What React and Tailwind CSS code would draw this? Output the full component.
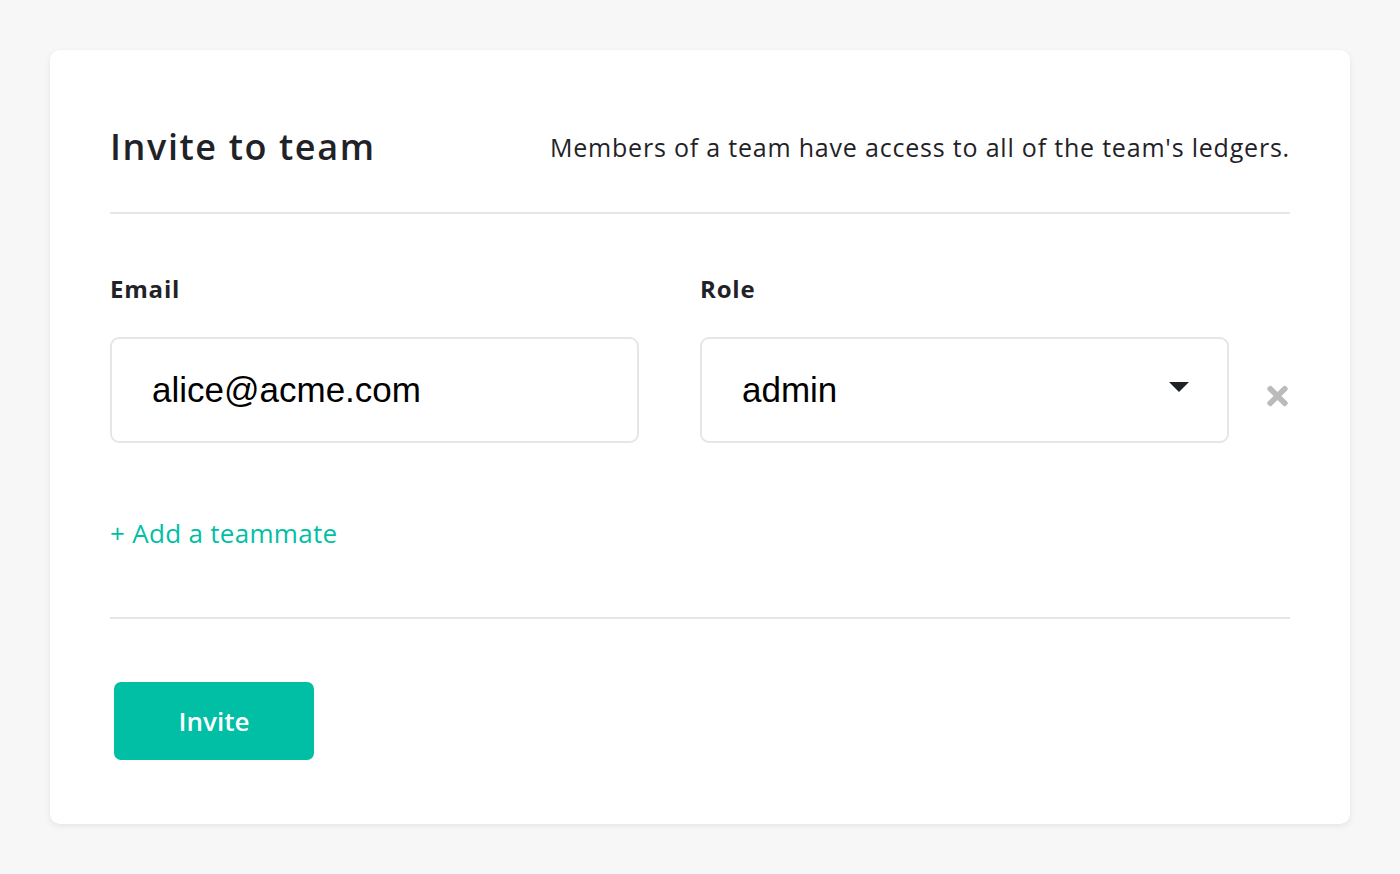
import React from 'react';
import { FaTimes } from 'react-icons/fa';

const App = () => {
  return (
    <div className="min-h-[874px] bg-[#f7f7f7] pt-[50px] px-[50px] font-['Open_Sans',sans-serif] text-[#1f2328]">
      <div className="bg-white rounded-[10px] shadow-[0_2px_6px_rgba(0,0,0,0.08)] px-[60px] pt-[60px] pb-[64px]">
        {/* Header */}
        <div className="flex justify-between items-center h-[74px] mb-[28px]">
          <h1 className="text-[36px] leading-none font-semibold tracking-[1.6px]">Invite to team</h1>
          <p className="text-[25px] leading-none tracking-[0.8px]">Members of a team have access to all of the team's ledgers.</p>
        </div>
        <div className="h-[2px] bg-[#e6e6e6]" />

        {/* Fields */}
        <div className="flex mt-[63px]">
          <div className="w-[529px] shrink-0">
            <label className="block text-[24px] leading-[24px] font-bold tracking-[0.8px]">Email</label>
            <div className="mt-[36px] h-[106px] border-2 border-[#e6e6e6] rounded-[9px] flex items-center pl-[40px]">
              <span className="font-['Liberation_Sans',sans-serif] text-[35px] text-black">alice@acme.com</span>
            </div>
          </div>
          <div className="w-[529px] shrink-0 ml-[61px]">
            <label className="block text-[24px] leading-[24px] font-bold tracking-[0.8px]">Role</label>
            <div className="mt-[36px] h-[106px] border-2 border-[#e6e6e6] rounded-[9px] flex items-center justify-between pl-[40px] pr-[38px]">
              <span className="font-['Liberation_Sans',sans-serif] text-[35px] text-black">admin</span>
              <svg width="20" height="10" viewBox="0 0 20 10" className="-mt-[6px]">
                <polygon points="0,0 20,0 10,10" fill="#1f2328" />
              </svg>
            </div>
          </div>
          <div className="flex-1 flex justify-end items-center pt-[66px] pr-[2px]">
            <FaTimes className="text-[#bbbbbb] w-[21px] h-[30px] mt-[6px]" />
          </div>
        </div>

        {/* Add teammate */}
        <div className="mt-[75px] h-[30px] flex items-center">
          <button className="text-[26px] leading-none text-[#00bfa5] tracking-[0.3px]">+ Add a teammate</button>
        </div>

        <div className="h-[2px] bg-[#e6e6e6] mt-[69px]" />

        {/* Submit */}
        <button className="mt-[63px] ml-[4px] w-[200px] h-[78px] rounded-[7px] bg-[#00bfa5] text-white text-[26px] font-semibold">
          Invite
        </button>
      </div>
    </div>
  );
};

export default App;
